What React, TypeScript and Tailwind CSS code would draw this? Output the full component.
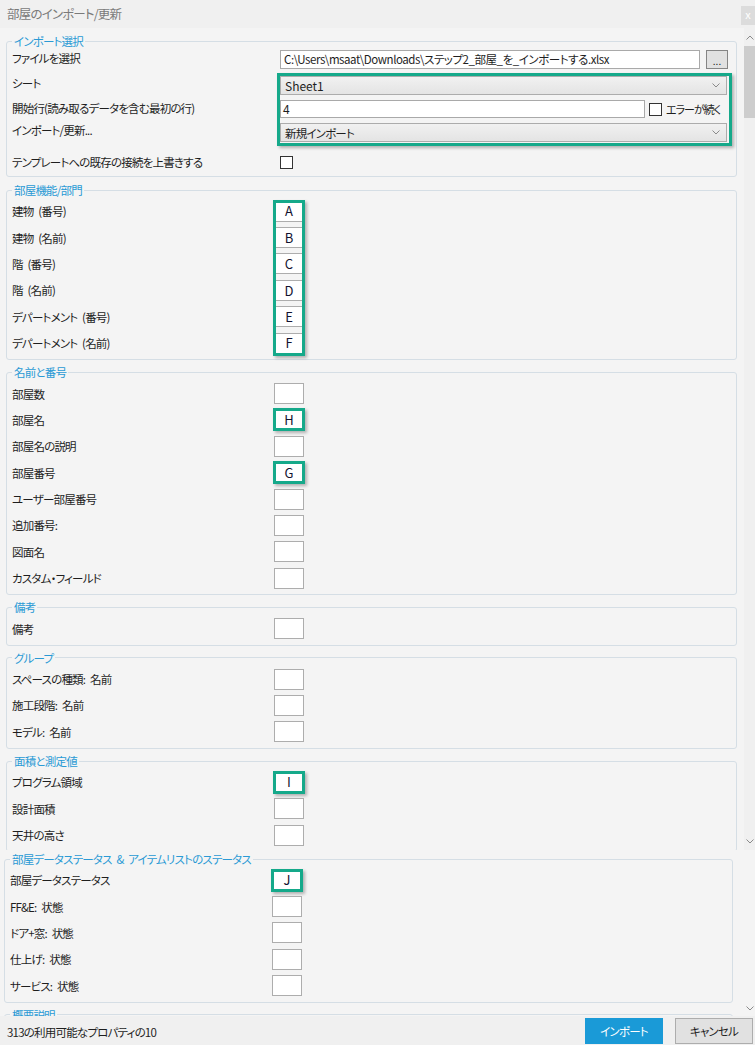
import React from "react";

const GREEN = "border-[#15a98a]";
const LBL = "text-[11.5px] leading-[16px] tracking-[-0.8px] [word-spacing:3px] whitespace-nowrap";

function Chevron({ up }: { up?: boolean }) {
  return (
    <svg width="8" height="5" viewBox="0 0 8 5" fill="none" stroke="#8a8a8a" strokeWidth="1">
      {up ? <path d="M0.5 4.5L4 1L7.5 4.5" /> : <path d="M0.5 0.5L4 4L7.5 0.5" />}
    </svg>
  );
}

function Box({ v, hl }: { v?: string; hl?: boolean }) {
  return (
    <div className="relative w-[30px] h-[21px] shrink-0 border border-[#adadad] bg-white flex items-center justify-center text-[13px] tracking-normal text-[#121230]">
      {v}
      {hl && (
        <div
          className={`absolute -inset-[2px] border-[3px] ${GREEN} shadow-[2px_2px_3px_rgba(0,0,0,0.28)]`}
        />
      )}
    </div>
  );
}

function Group({
  title,
  children,
  className = "",
}: {
  title: string;
  children?: React.ReactNode;
  className?: string;
}) {
  return (
    <fieldset
      className={`border border-[#d5dee5] rounded-[3px] pl-[5px] pr-[4px] pb-[3px] min-w-0 ${className}`}
    >
      <legend className={`px-[2px] ${LBL} text-[#2a9ad5]`}>{title}</legend>
      {children}
    </fieldset>
  );
}

function Row({ label, v, hl }: { label: string; v?: string; hl?: boolean }) {
  return (
    <div className="flex items-center h-[26.4px]">
      <div className={`w-[262px] shrink-0 ${LBL}`}>{label}</div>
      <Box v={v} hl={hl} />
    </div>
  );
}

function Select({ text, latin }: { text: string; latin?: boolean }) {
  return (
    <div className="w-[447px] h-[19px] border border-[#acacac] bg-linear-to-b from-[#f1f1f1] to-[#e4e4e4] flex items-center justify-between pl-[4px] pr-[6px]">
      <span className={latin ? "text-[12px]" : LBL}>{text}</span>
      <Chevron />
    </div>
  );
}

function Check() {
  return <div className="w-[13px] h-[13px] shrink-0 border border-[#333] bg-white" />;
}

const dept = [
  ["建物 (番号)", "A"],
  ["建物 (名前)", "B"],
  ["階 (番号)", "C"],
  ["階 (名前)", "D"],
  ["デパートメント (番号)", "E"],
  ["デパートメント (名前)", "F"],
];

export default function App() {
  return (
    <div className="w-[755px] h-[1045px] overflow-hidden bg-[#f4f4f4] text-[#1e1e1e] font-['Noto_Sans_CJK_JP',sans-serif] [font-feature-settings:'palt']">
      {/* title bar */}
      <div className="h-[28px] bg-[#f0f0f0] flex justify-between">
        <div className="pl-[7px] pt-[5px] text-[12.5px] leading-[18px] tracking-[-0.8px] text-[#7a7a7a]">
          部屋のインポート/更新
        </div>
        <div className="w-[14px] h-[19px] mt-[6px] bg-[#dcdcdc] text-white text-[11px] leading-[17px] text-center">
          x
        </div>
      </div>

      <div className="h-[988px] overflow-hidden flex flex-col">
        {/* scrolled area, top part */}
        <div className="h-[822px] shrink-0 flex">
          <div className="flex-1 min-w-0 overflow-hidden pl-[6px] pr-[7px]">
            <Group title="インポート選択" className="mt-[5px]">
              <div className="flex items-start h-[24px] pt-[1px]">
                <div className={`w-[268px] shrink-0 ${LBL}`}>ファイルを選択</div>
                <div className="w-[420px] shrink-0 h-[19px] border border-[#a9a9a9] bg-white flex items-center px-[3px] text-[11.5px] tracking-[-0.45px] whitespace-nowrap overflow-hidden">
                  {"C:\\Users\\msaat\\Downloads\\ステップ2_部屋_を_インポートする.xlsx"}
                </div>
                <div className="ml-[6px] w-[22px] shrink-0 h-[19px] border border-[#858585] bg-[#e1e1e1] text-[10px] leading-[19px] text-center">
                  ...
                </div>
              </div>
              <div className="flex">
                <div className={`w-[265px] shrink-0 pt-[2px] ${LBL}`}>
                  <div className="h-[25px]">シート</div>
                  <div className="h-[22px]">開始行(読み取るデータを含む最初の行)</div>
                  <div>インポート/更新...</div>
                </div>
                <div className="relative w-[455px] shrink-0 pl-[3px] pr-[5px] pt-[3px] pb-[4px]">
                  <Select text="Sheet1" latin />
                  <div className="flex items-center mt-[5px] h-[18px] w-[449px]">
                    <div className="w-[365px] shrink-0 h-[18px] border border-[#a9a9a9] bg-white flex items-center px-[2px] text-[12px]">
                      4
                    </div>
                    <div className="ml-[4px]">
                      <Check />
                    </div>
                    <span className="ml-[4px] text-[11px] leading-[16px] tracking-[-1px] whitespace-nowrap">
                      エラーが続く
                    </span>
                  </div>
                  <div className="mt-[5px]">
                    <Select text="新規インポート" />
                  </div>
                  <div
                    className={`absolute inset-0 border-[3px] ${GREEN} shadow-[2px_2px_3px_rgba(0,0,0,0.28)]`}
                  />
                </div>
              </div>
              <div className="flex items-center h-[16px] mt-[8px] mb-[3px]">
                <div className={`w-[268px] shrink-0 ${LBL}`}>
                  テンプレートへの既存の接続を上書きする
                </div>
                <Check />
              </div>
            </Group>

            <Group title="部屋機能/部門" className="mt-[5px]">
              <div className="flex">
                <div className="w-[262px] shrink-0">
                  {dept.map(([l]) => (
                    <div key={l} className={`h-[26.4px] flex items-center ${LBL}`}>
                      {l}
                    </div>
                  ))}
                </div>
                <div className="relative">
                  {dept.map(([l, v]) => (
                    <div key={l} className="h-[26.4px] flex items-center">
                      <Box v={v} />
                    </div>
                  ))}
                  <div
                    className={`absolute -left-[1px] -right-[1px] top-[2px] bottom-0 border-[3px] ${GREEN} shadow-[2px_2px_3px_rgba(0,0,0,0.28)]`}
                  />
                </div>
              </div>
            </Group>

            <Group title="名前と番号" className="mt-[4px]">
              <Row label="部屋数" />
              <Row label="部屋名" v="H" hl />
              <Row label="部屋名の説明" />
              <Row label="部屋番号" v="G" hl />
              <Row label="ユーザー部屋番号" />
              <Row label="追加番号:" />
              <Row label="図面名" />
              <Row label="カスタム・フィールド" />
            </Group>

            <Group title="備考" className="mt-[4px]">
              <Row label="備考" />
            </Group>

            <Group title="グループ" className="mt-[4px]">
              <Row label="スペースの種類: 名前" />
              <Row label="施工段階: 名前" />
              <Row label="モデル: 名前" />
            </Group>

            <Group title="面積と測定値" className="mt-[4px]">
              <Row label="プログラム領域" v="I" hl />
              <Row label="設計面積" />
              <Row label="天井の高さ" />
            </Group>
          </div>

          {/* scrollbar */}
          <div className="w-[11px] shrink-0 bg-[#f0f0f0] flex flex-col">
            <div className="h-[18px] flex items-center justify-center">
              <Chevron up />
            </div>
            <div className="h-[72px] bg-[#cdcdcd]" />
            <div className="flex-1" />
            <div className="h-[18px] flex items-center justify-center">
              <Chevron />
            </div>
          </div>
        </div>

        {/* scrolled area, lower part */}
        <div className="flex-1 flex min-h-0">
          <div className="flex-1 min-w-0 overflow-hidden pl-[4px] pr-[11px]">
            <Group title="部屋データステータス & アイテムリストのステータス" className="mt-[1px]">
              <Row label="部屋データステータス" v="J" hl />
              <Row label="FF&E: 状態" />
              <Row label="ドア+窓: 状態" />
              <Row label="仕上げ: 状態" />
              <Row label="サービス: 状態" />
            </Group>
            <Group title="概要説明" className="mt-[4px]">
              <div className="h-[40px]" />
            </Group>
          </div>
          <div className="w-[11px] shrink-0 flex flex-col justify-end">
            <div className="h-[10px] flex items-start justify-center">
              <Chevron />
            </div>
          </div>
        </div>
      </div>

      {/* footer */}
      <div className="h-[29px] flex items-center justify-between pl-[7px] pr-[2px] bg-[#f0f0f0]">
        <div className={`pt-[3px] ${LBL}`}>313の利用可能なプロパティの10</div>
        <div className="flex">
          <div className={`w-[78px] h-[26px] bg-[#1a9ad7] text-white ${LBL} flex items-center justify-center`}>
            インポート
          </div>
          <div className={`ml-[12px] w-[78px] h-[26px] bg-[#e1e1e1] border border-[#adadad] ${LBL} flex items-center justify-center`}>
            キャンセル
          </div>
        </div>
      </div>
    </div>
  );
}
